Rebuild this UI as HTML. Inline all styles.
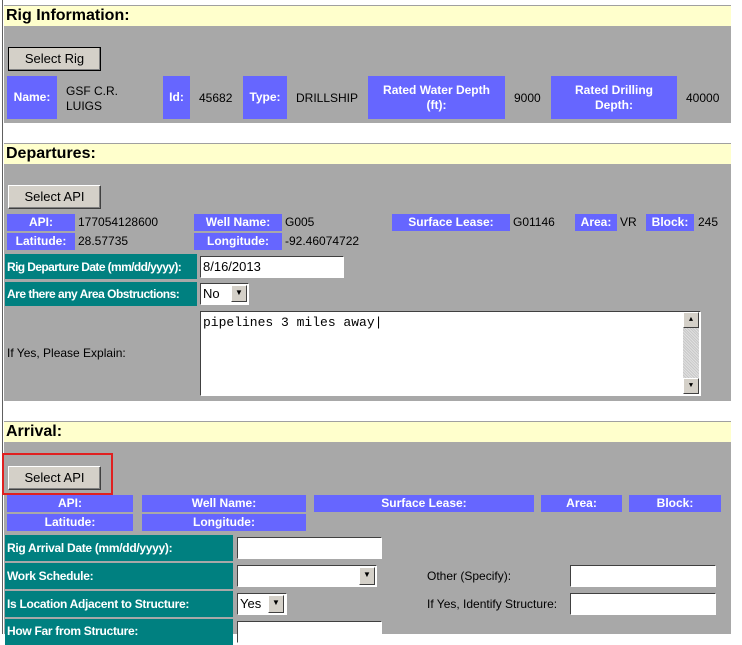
<!DOCTYPE html>
<html><head><style>
body{margin:0;width:742px;height:634px;overflow:hidden;background:#fff;font-family:"Liberation Sans",Arial,sans-serif;position:relative}
.a{position:absolute;box-sizing:border-box}
.hd{background:#ffffcc;border-top:1px solid #a0a0a0;font-weight:bold;font-size:16px;line-height:20px;padding-left:2px;color:#000}
.gr{background:#a8a8a8}
.btn{background:#d4d0c8;border:1px solid;border-color:#fff #404040 #404040 #fff;box-shadow:inset -1px -1px #808080;font-size:13px;text-align:center;color:#000}
.bl{background:#6666ff;color:#fff;font-weight:bold;font-size:12px;text-align:center;display:flex;align-items:center;justify-content:center;line-height:15px}
.tx{font-size:12px;color:#000}
.tl{background:#008080;color:#fff;font-weight:bold;font-size:12px;display:flex;align-items:center;padding-left:2px;letter-spacing:-0.3px;overflow:hidden}
.in{background:#fff;border:1px solid;border-color:#404040 #fff #fff #404040;font-size:13px;padding-left:2px}
.dd{background:#d4d0c8;border:1px solid;border-color:#fff #404040 #404040 #fff;font-size:8px;text-align:center;line-height:14px}
</style></head><body>
<div class="a" style="left:2px;top:0;width:1px;height:634px;background:#606060"></div>

<div class="a hd" style="left:4px;top:5px;width:727px;height:21px">Rig Information:</div>
<div class="a gr" style="left:4px;top:26px;width:727px;height:97px"></div>
<div class="a btn" style="left:8px;top:47px;width:93px;height:24px;line-height:21px;border:1px solid #000">Select Rig</div>
<div class="a bl" style="left:7px;top:76px;width:50px;height:43px">Name:</div>
<div class="a tx" style="left:66px;top:84px;line-height:15px">GSF C.R.<br>LUIGS</div>
<div class="a bl" style="left:163px;top:76px;width:27px;height:43px">Id:</div>
<div class="a tx" style="left:199px;top:91px">45682</div>
<div class="a bl" style="left:243px;top:76px;width:44px;height:43px">Type:</div>
<div class="a tx" style="left:296px;top:91px">DRILLSHIP</div>
<div class="a bl" style="left:368px;top:76px;width:137px;height:43px">Rated Water Depth<br>(ft):</div>
<div class="a tx" style="left:514px;top:91px">9000</div>
<div class="a bl" style="left:551px;top:76px;width:126px;height:43px">Rated Drilling<br>Depth:</div>
<div class="a tx" style="left:686px;top:91px">40000</div>

<div class="a hd" style="left:4px;top:143px;width:727px;height:21px">Departures:</div>
<div class="a gr" style="left:4px;top:164px;width:727px;height:237px"></div>
<div class="a btn" style="left:8px;top:185px;width:93px;height:24px;line-height:22px">Select API</div>
<div class="a bl" style="left:7px;top:214px;width:68px;height:17px">API:</div>
<div class="a tx" style="left:78px;top:215px">177054128600</div>
<div class="a bl" style="left:194px;top:214px;width:88px;height:17px">Well Name:</div>
<div class="a tx" style="left:285px;top:215px">G005</div>
<div class="a bl" style="left:392px;top:214px;width:118px;height:17px">Surface Lease:</div>
<div class="a tx" style="left:513px;top:215px">G01146</div>
<div class="a bl" style="left:575px;top:214px;width:42px;height:17px">Area:</div>
<div class="a tx" style="left:620px;top:215px">VR</div>
<div class="a bl" style="left:646px;top:214px;width:48px;height:17px">Block:</div>
<div class="a tx" style="left:698px;top:215px">245</div>
<div class="a bl" style="left:7px;top:233px;width:68px;height:17px">Latitude:</div>
<div class="a tx" style="left:78px;top:234px">28.57735</div>
<div class="a bl" style="left:194px;top:233px;width:88px;height:17px">Longitude:</div>
<div class="a tx" style="left:285px;top:234px">-92.46074722</div>
<div class="a tl" style="left:5px;top:254px;width:192px;height:25px;letter-spacing:-0.6px">Rig Departure Date (mm/dd/yyyy):</div>
<div class="a in" style="left:200px;top:256px;width:144px;height:22px;line-height:20px">8/16/2013</div>
<div class="a tl" style="left:5px;top:282px;width:192px;height:24px;letter-spacing:-0.5px">Are there any Area Obstructions:</div>
<div class="a in" style="left:200px;top:283px;width:49px;height:22px;line-height:20px">No<div class="a dd" style="left:30px;top:1px;width:16px;height:17px">▼</div></div>
<div class="a tx" style="left:7px;top:346px">If Yes, Please Explain:</div>
<div class="a in" style="left:200px;top:311px;width:501px;height:85px;font-family:'Liberation Mono',monospace;font-size:13px;padding-top:3px">pipelines 3 miles away|
<div class="a" style="left:482px;top:0;width:16px;height:82px;background:repeating-linear-gradient(45deg,#e0e0e0 0 1px,#c8c8c8 1px 2px)"></div>
<div class="a dd" style="left:482px;top:0;width:16px;height:16px;font-size:7px">▲</div>
<div class="a dd" style="left:482px;top:66px;width:16px;height:16px;font-size:7px">▼</div></div>

<div class="a hd" style="left:4px;top:421px;width:727px;height:21px">Arrival:</div>
<div class="a gr" style="left:4px;top:442px;width:727px;height:192px"></div>
<div class="a" style="left:2px;top:453px;width:111px;height:42px;border:2px solid #e02020"></div>
<div class="a btn" style="left:8px;top:466px;width:93px;height:24px;line-height:22px">Select API</div>
<div class="a bl" style="left:7px;top:495px;width:126px;height:17px">API:</div>
<div class="a bl" style="left:142px;top:495px;width:164px;height:17px">Well Name:</div>
<div class="a bl" style="left:314px;top:495px;width:220px;height:17px">Surface Lease:</div>
<div class="a bl" style="left:541px;top:495px;width:81px;height:17px">Area:</div>
<div class="a bl" style="left:629px;top:495px;width:92px;height:17px">Block:</div>
<div class="a bl" style="left:7px;top:514px;width:126px;height:17px">Latitude:</div>
<div class="a bl" style="left:142px;top:514px;width:164px;height:17px">Longitude:</div>
<div class="a tl" style="left:5px;top:535px;width:228px;height:26px">Rig Arrival Date (mm/dd/yyyy):</div>
<div class="a in" style="left:237px;top:537px;width:145px;height:22px"></div>
<div class="a tl" style="left:5px;top:563px;width:228px;height:26px">Work Schedule:</div>
<div class="a in" style="left:237px;top:565px;width:140px;height:22px"><div class="a dd" style="left:121px;top:1px;width:16px;height:18px">▼</div></div>
<div class="a tx" style="left:427px;top:569px">Other (Specify):</div>
<div class="a in" style="left:570px;top:565px;width:146px;height:22px"></div>
<div class="a tl" style="left:5px;top:591px;width:228px;height:26px">Is Location Adjacent to Structure:</div>
<div class="a in" style="left:237px;top:593px;width:50px;height:22px;line-height:20px">Yes<div class="a dd" style="left:30px;top:1px;width:16px;height:18px">▼</div></div>
<div class="a tx" style="left:427px;top:597px">If Yes, Identify Structure:</div>
<div class="a in" style="left:570px;top:593px;width:146px;height:22px"></div>
<div class="a tl" style="left:5px;top:619px;width:228px;height:26px;align-items:flex-start;padding-top:5px">How Far from Structure:</div>
<div class="a in" style="left:237px;top:621px;width:145px;height:22px"></div>
</body></html>
